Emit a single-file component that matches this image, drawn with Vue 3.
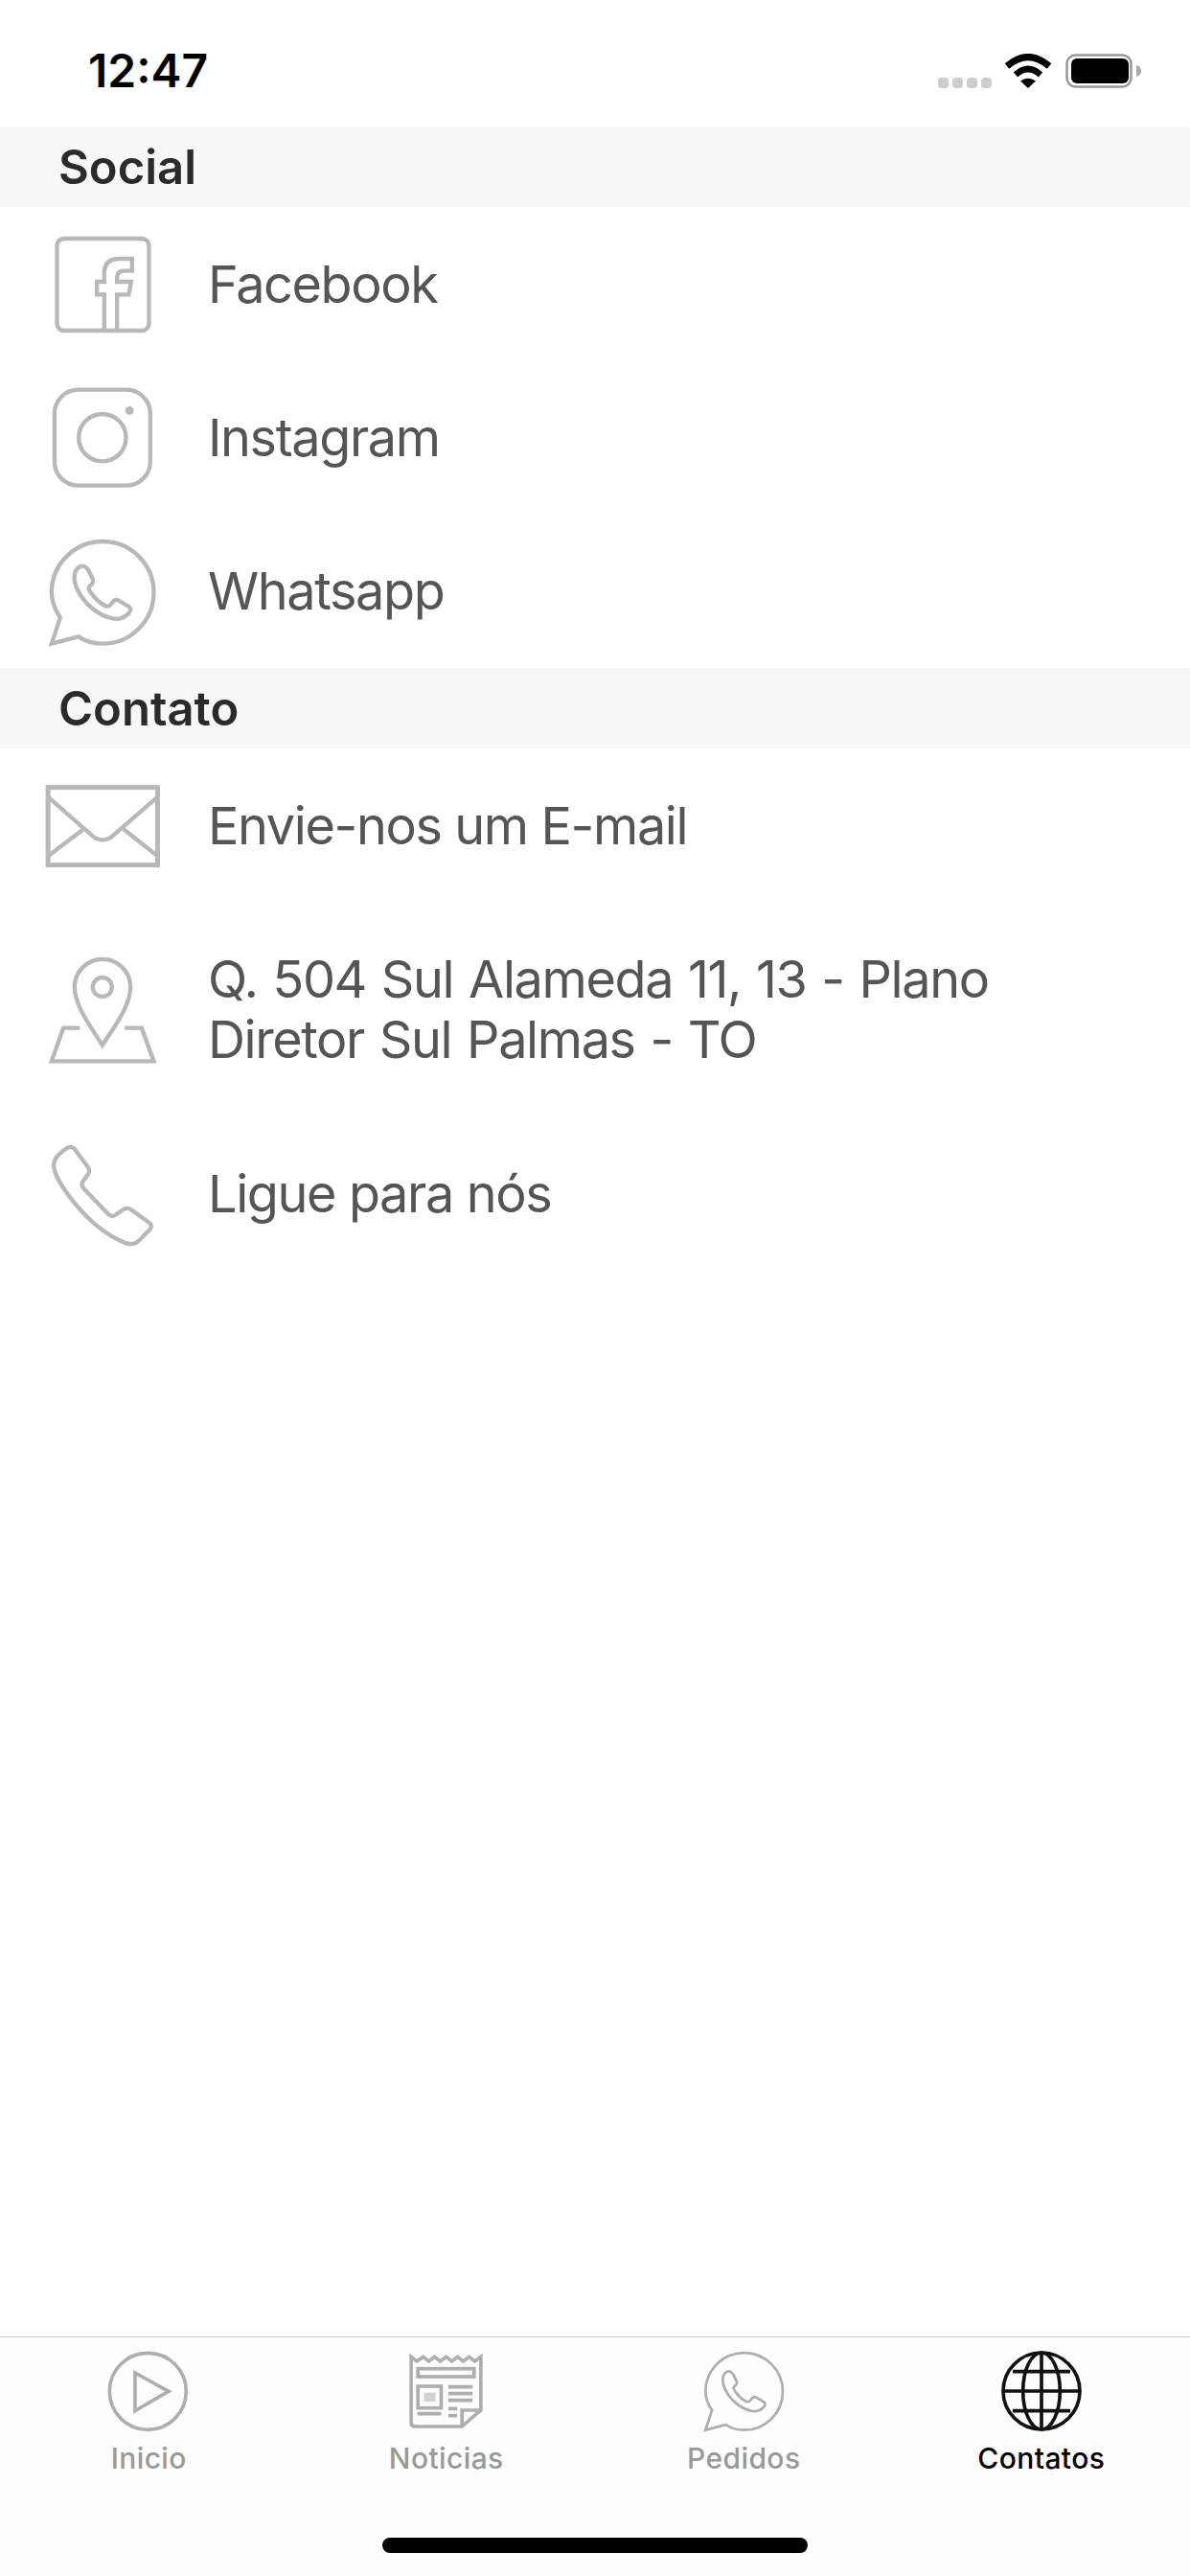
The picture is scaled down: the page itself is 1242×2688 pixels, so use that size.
<script setup>
// shared by the Whatsapp row and the Pedidos tab
const whatsappBubble =
  'M103,1352 L130,1270 C110,1240 103,1215 103,1192 A160,160 0 1 1 263,1352 C235,1352 210,1345 187,1330 Z'
const whatsappPhone =
  'M190,1112 C200,1105 212,1110 218,1122 L232,1150 C235,1160 232,1165 222,1172 C216,1178 220,1185 228,1195 C240,1212 255,1225 270,1233 C280,1238 285,1235 292,1225 C298,1215 305,1212 315,1218 L345,1236 C352,1242 352,1248 345,1256 C330,1272 310,1278 290,1272 C245,1262 205,1225 185,1185 C170,1155 170,1125 190,1112 Z'
</script>

<template>
  <div class="screen">
    <header class="status-bar">
      <span class="time">12:47</span>
      <svg class="status-icons" width="212" height="36" viewBox="0 0 212 36">
        <g fill="#cdcdcd">
          <rect x="0" y="25" width="11" height="11" rx="3.5" />
          <rect x="15" y="25" width="11" height="11" rx="3.5" />
          <rect x="30" y="25" width="11" height="11" rx="3.5" />
          <rect x="45" y="25" width="11" height="11" rx="3.5" />
        </g>
        <path d="M72,13 Q94,-6 116,13" fill="none" stroke="#000" stroke-width="7" />
        <path d="M81,22 Q94,10 107,22" fill="none" stroke="#000" stroke-width="6.5" />
        <path d="M86,28.5 Q94,23 102,28.5 L94,36 Z" fill="#000" />
        <rect x="134.5" y="1.5" width="67" height="33" rx="9" fill="none" stroke="#999" stroke-width="2.5" />
        <rect x="139" y="5" width="60" height="26" rx="6" fill="#000" />
        <path d="M207,12 C211,13 212,16 212,18 C212,20 211,23 207,24 Z" fill="#aaa" />
      </svg>
    </header>

    <main class="content">
      <h2 class="section">Social</h2>
      <div class="row">
        <svg class="row-icon" width="126" height="126" viewBox="73.5 39 378 378">
          <rect x="120" y="87" width="288" height="288" rx="22" />
          <path d="M268,372 L268,262 L245,262 L245,222 L268,222 L268,195 C268,165 285,150 315,150 L355,150 L355,188 L330,188 C315,188 308,195 308,208 L308,222 L352,222 L345,262 L308,262 L308,372" />
        </svg>
        <span>Facebook</span>
      </div>
      <div class="row">
        <svg class="row-icon" width="126" height="126" viewBox="73.5 519 378 378">
          <rect x="112" y="560" width="300" height="300" rx="75" />
          <circle cx="262" cy="710" r="74" />
          <circle class="solid" cx="347" cy="625" r="13" />
        </svg>
        <span>Instagram</span>
      </div>
      <div class="row">
        <svg class="row-icon" width="126" height="126" viewBox="73.5 999 378 378">
          <path :d="whatsappBubble" />
          <path :d="whatsappPhone" />
        </svg>
        <span>Whatsapp</span>
      </div>

      <h2 class="section">Contato</h2>
      <div class="row">
        <svg class="row-icon" width="126" height="126" viewBox="73.5 24 378 378">
          <rect class="thick" x="92" y="95" width="343" height="243" />
          <path d="M92,125 L235,250 C250,262 275,262 290,250 L435,125" />
          <path d="M92,310 L200,228 M435,310 L328,225" />
        </svg>
        <span>Envie-nos um E-mail</span>
      </div>
      <div class="row row-tall">
        <svg class="row-icon" width="126" height="126" viewBox="73.5 600 378 378">
          <path d="M262,902 C230,850 175,780 175,720 A87,87 0 0 1 350,720 C350,780 295,850 262,902 Z" />
          <circle cx="262" cy="720" r="30" />
          <path d="M192,848 L140,848 L103,952 L423,952 L385,848 L332,848" />
        </svg>
        <span>Q. 504 Sul Alameda 11, 13 - Plano<br />Diretor Sul Palmas - TO</span>
      </div>
      <div class="row">
        <svg class="row-icon" width="126" height="126" viewBox="73.5 1176 378 378">
          <path d="M150,1225 C160,1218 170,1220 176,1228 L218,1285 C224,1295 222,1302 214,1310 L200,1330 C196,1338 198,1345 205,1352 L280,1430 C288,1438 295,1440 305,1432 L328,1416 C338,1410 345,1412 352,1417 L405,1455 C416,1462 418,1470 410,1480 L375,1515 C362,1528 345,1528 320,1515 C265,1490 210,1440 170,1390 C135,1345 112,1310 110,1280 C108,1262 118,1248 150,1225 Z" />
        </svg>
        <span>Ligue para nós</span>
      </div>
    </main>

    <footer class="tab-bar">
      <nav class="tabs">
        <div class="tab">
          <svg class="tab-icon" width="90" height="90" viewBox="150 90 270 270">
            <circle cx="283" cy="226" r="120" />
            <path d="M243,168 L348,226 L243,287 Z" />
          </svg>
          <span>Inicio</span>
        </div>
        <div class="tab">
          <svg class="tab-icon" width="90" height="90" viewBox="1081.5 90 270 270">
            <path d="M1106,118 L1124,132 L1143,118 L1161,132 L1179,118 L1197,132 L1215,118 L1233,132 L1251,118 L1269,132 L1287,118 L1305,132 L1324,118 L1324,285 L1265,336 L1118,336 Q1106,336 1106,324 Z" />
            <path d="M1324,285 L1265,285 L1265,336" />
            <rect x="1127" y="155" width="176" height="25" />
            <rect x="1127" y="210" width="73" height="68" />
            <rect class="solid" x="1146" y="230" width="36" height="28" fill-opacity="0.55" />
            <path d="M1222,212 L1298,212 M1222,233 L1298,233 M1222,254 L1298,254 M1222,280 L1250,280 M1222,302 L1250,302 M1125,296 L1200,296" />
          </svg>
          <span>Noticias</span>
        </div>
        <div class="tab">
          <svg class="tab-icon" width="90" height="90" viewBox="82 1012 357 357">
            <path :d="whatsappBubble" />
            <path :d="whatsappPhone" />
          </svg>
          <span>Pedidos</span>
        </div>
        <div class="tab tab-active">
          <svg class="tab-icon" width="90" height="90" viewBox="1087 91 270 270">
            <circle cx="1222" cy="226" r="120" />
            <ellipse cx="1222" cy="226" rx="58" ry="120" />
            <path d="M1222,106 L1222,346 M1102,226 L1342,226 M1132,165 L1312,165 M1132,288 L1312,288" />
          </svg>
          <span>Contatos</span>
        </div>
      </nav>
      <div class="home-indicator"></div>
    </footer>
  </div>
</template>

<style scoped>
.screen {
  display: flex;
  flex-direction: column;
  height: 2688px;
  background: #fff;
  font-family: Inter, "Liberation Sans", sans-serif;
}

.status-bar {
  display: flex;
  justify-content: space-between;
  align-items: flex-start;
  height: 132px;
  padding: 50px 51px 0 92px;
  box-sizing: border-box;
}

.time {
  font-size: 48px;
  line-height: 48px;
  font-weight: 600;
  color: #000;
}

.status-icons {
  margin-top: 6px;
}

.content {
  flex: 1;
}

.section {
  height: 84px;
  margin: 0;
  padding-left: 61px;
  background: #f7f7f7;
  color: #2b2b2b;
  font-size: 49px;
  line-height: 86px;
  font-weight: 600;
}

.row {
  display: flex;
  align-items: center;
  gap: 47px;
  height: 160.33px;
  padding-left: 44px;
  color: #555;
  font-size: 54px;
  line-height: 63px;
  letter-spacing: -1.4px;
}

.row-tall {
  height: 224px;
  word-spacing: 2px;
}

.row-icon {
  flex: none;
  fill: none;
  stroke: #b8b8b8;
  stroke-width: 13;
}

.row-icon .thick {
  stroke-width: 15;
}

.row-icon .solid {
  fill: #b8b8b8;
  stroke: none;
}

.tab-bar {
  display: flex;
  flex-direction: column;
  align-items: center;
  height: 250px;
  box-sizing: border-box;
  border-top: 1px solid #c4c4c4;
  background: #fdfdfd;
}

.tabs {
  display: grid;
  grid-template-columns: repeat(4, 1fr);
  width: 100%;
  padding-top: 11px;
}

.tab {
  display: flex;
  flex-direction: column;
  align-items: center;
  gap: 7px;
  color: #999;
  font-size: 30px;
  line-height: 36px;
  font-weight: 500;
  letter-spacing: 0.4px;
}

.tab-icon {
  fill: none;
  stroke: #aeaeae;
  stroke-width: 11;
}

.tab-icon .solid {
  fill: #aeaeae;
  stroke: none;
}

.tab-active {
  color: #000;
}

.tab-active .tab-icon {
  stroke: #111;
}

.home-indicator {
  width: 444px;
  height: 16px;
  margin-top: 65px;
  border-radius: 8px;
  background: #000;
}
</style>
